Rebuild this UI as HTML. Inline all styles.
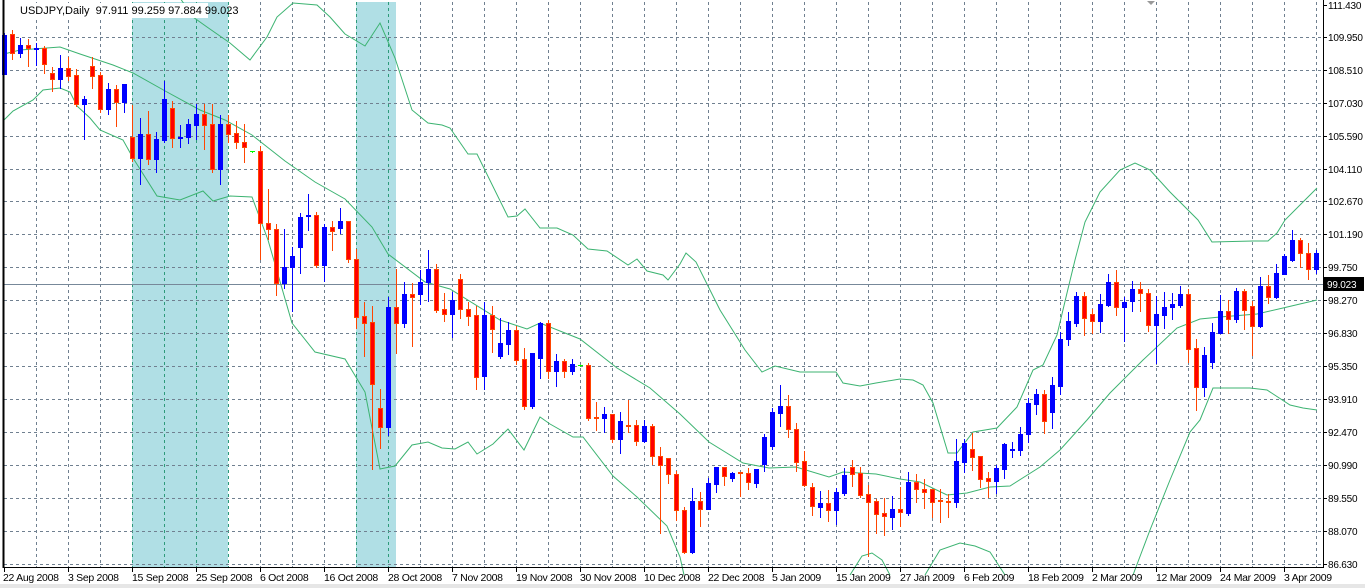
<!DOCTYPE html>
<html><head><meta charset="utf-8"><style>
html,body{margin:0;padding:0;background:#fff;width:1365px;height:588px;overflow:hidden}
svg{display:block;font-family:"Liberation Sans",sans-serif}
</style></head><body>
<svg id="c" width="1365" height="588" xmlns="http://www.w3.org/2000/svg">
<rect x="0" y="0" width="1365" height="588" fill="#fff"/>
<rect x="0" y="584" width="1365" height="4" fill="#e6e6e6"/>
<rect x="132" y="2" width="96" height="565" fill="#b0dfe5"/>
<rect x="356" y="2" width="40" height="565" fill="#b0dfe5"/>
<g id="grid"></g>
<g id="bands" fill="none" stroke="#3cb371" stroke-width="1"></g>
<line x1="3" y1="284.5" x2="1323" y2="284.5" stroke="#778899" stroke-width="1"/>
<g id="candles"></g>
<rect x="16" y="3" width="192" height="15" fill="#fff"/>
<text x="20" y="14" font-size="11" fill="#000" style="white-space:pre">USDJPY,Daily  97.911 99.259 97.884 99.023</text>
<line x1="3.5" y1="0" x2="3.5" y2="568" stroke="#000" stroke-width="2"/>
<line x1="3" y1="567.5" x2="1323" y2="567.5" stroke="#000"/>
<line x1="1323.5" y1="0" x2="1323.5" y2="568" stroke="#000"/>
<g id="axis" fill="#000"></g>
<rect x="1324" y="277" width="40" height="14" fill="#000"/>
<text x="1327" y="288" font-size="10" fill="#fff" letter-spacing="-0.2">99.023</text>
<path d="M1147 1 L1155 1 L1151 5 Z" fill="#999"/>
</svg>
<script>
var NS="http://www.w3.org/2000/svg";
function el(p,t,a){var e=document.createElementNS(NS,t);for(var k in a)e.setAttribute(k,a[k]);p.appendChild(e);return e;}
var grid=document.getElementById('grid');
var hy=[5,37,70,103,136,169,201,234,267,300,333,366,399,432,465,498,531,564];
for(var x=36;x<1323;x+=32){var sh=(x>=132&&x<=228)||(x>=356&&x<=396);
el(grid,'line',{x1:x+.5,y1:2,x2:x+.5,y2:567,stroke:sh?'#2e9a7a':'#708090','stroke-dasharray':'3,3'});}
hy.forEach(function(y){if(y>5&&y<567)el(grid,'line',{x1:4,y1:y+.5,x2:1323,y2:y+.5,stroke:'#708090','stroke-dasharray':'3,3'});});
var ax=document.getElementById('axis');
var pl=["111.430","109.950","108.510","107.030","105.590","104.110","102.670","101.190","99.750","98.270","96.830","95.350","93.910","92.470","90.990","89.550","88.070","86.630"];
pl.forEach(function(t,i){var y=hy[i];el(ax,'line',{x1:1323,y1:y+.5,x2:1327,y2:y+.5,stroke:'#000'});
var tx=el(ax,'text',{x:1328,y:y+4,'font-size':10,'letter-spacing':'-0.2'});tx.textContent=t;});
var dl=[["22 Aug 2008",4],["3 Sep 2008",68],["15 Sep 2008",132],["25 Sep 2008",196],["6 Oct 2008",260],["16 Oct 2008",324],["28 Oct 2008",388],["7 Nov 2008",452],["19 Nov 2008",516],["30 Nov 2008",580],["10 Dec 2008",644],["22 Dec 2008",708],["5 Jan 2009",772],["15 Jan 2009",836],["27 Jan 2009",900],["6 Feb 2009",964],["18 Feb 2009",1028],["2 Mar 2009",1092],["12 Mar 2009",1156],["24 Mar 2009",1220],["3 Apr 2009",1284]];
dl.forEach(function(d){el(ax,'line',{x1:d[1]+.5,y1:568,x2:d[1]+.5,y2:572,stroke:'#000'});var t=el(ax,'text',{x:d[1]+(d[1]==4?-1:0),y:581,'font-size':10.5,'letter-spacing':'-0.3'});t.textContent=d[0];});
var A=function(v){return 20+v*0.3444;};
var Z7=function(v){return 370+v/3;},Z8=function(v){return 260+v/3;},Z9=function(v){return 220+v/3;};
var d1=[["b",45,158,38,158],["r",42,95,30,112],["b",73,95,52,107],["r",73,82,55,135],["b",80,83,67,130],["r",82,127,75,153],["r",155,170,137,205],["b",138,170,102,198],["r",140,162,107,175],["r",160,245,142,250],["b",229,243,220,345],["r",134,162,107,197],["r",160,258,150,268],["b",200,258,183,272],["r",200,237,188,307],["b",186,237,186,267],["r",340,400,247,408],["b",331,400,285,475],["r",331,403,263,417],["b",346,403,325,442],["b",229,347,177,354],["r",256,344,236,368],["b",339,345,305,368],["b",302,341,287,356],["b",273,304,243,345],["r",273,304,245,376],["r",302,432,245,442],["b",302,432,276,475],["r",302,330,276,355],
["r",328,355,292,372],["r",354,368,302,413],["g",381,383,381,383],["r",380,588,367,693],["r",588,608,491,635],["r",607,763,592,798],["b",717,763,607,777],["b",685,718,658,845],["b",572,658,560,735],["b",566,573,505,610],["r",566,711,558,717],["b",601,711,592,758],["r",601,612,584,668],["b",584,603,546,618],["r",584,695,584,703],["r",694,861,666,893],["r",859,880,818,976],["r",877,1058,830,1305],["r",1128,1181,1070,1243],["b",833,1182,805,1205],["r",833,880,722,967],["b",796,880,761,890],["r",796,803,765,947],["b",760,796,725,826],["b",722,762,668,815],["r",722,841,708,848],["r",840,853,793,875],
["b",813,853,790,920],["r",752,838,738,865],["r",838,860,818,886],["r",858,1036,830,1070],["b",857,1033,820,1070],["r",856,896,830,963],["b",938,976,866,980],["b",900,940,876,970],["r",900,986,888,1000],["r",984,1120,952,1130],["b",967,1120,967,1126],["b",880,980,876,1040],["r",880,1018,872,1040],["b",990,1018,970,1062],["r",990,1020,985,1036],["b",1000,1020,985,1027],["g",1002,1004,1002,1004],["r",1002,1155,996,1162],["r",1153,1156,1108,1190],["b",1144,1155,1124,1197],["r",1144,1216,1144,1226],["b",1164,1216,1138,1258],["r",1176,1179,1103,1195],["r",1177,1223,1160,1235],["b",1180,1223,1160,1226],["r",1180,1266,1172,1288],["r",1266,1293,1240,1490],["r",1273,1318,1273,1345],["r",1318,1422,1310,1452]];
var d2=[["r",420,547,410,550],["b",393,547,353,550],["r",393,418,366,467],["b",339,418,323,418],["b",291,341,291,365],["r",291,317,291,345],["b",309,323,305,332],["r",307,311,307,377],["r",310,337,293,358],["b",296,338,296,350],["b",201,281,192,304],["b",126,227,115,236],["b",107,128,45,167],["r",107,178,75,200],["r",177,277,160,302],["r",273,344,243,348],["r",351,409,340,434],["b",399,410,363,440],["r",399,421,360,452],["b",366,421,354,462],["b",315,368,295,376],["r",292,313,270,347],["r",310,374,292,380],["r",373,395,345,557],["r",393,431,387,490],["r",430,437,385,494],["b",418,442,379,478],["r",418,427,352,467]];
var d3=[["b",665,760,636,765],["r",665,688,642,725],["r",688,697,658,745],["r",688,725,688,770],["r",720,723,688,785],["r",722,727,703,770],["b",603,727,536,742],["b",549,605,536,637],["r",568,590,520,630],["r",588,656,588,680],["r",655,662,636,710],["b",624,662,614,700],["b",551,626,549,653],["b",567,571,545,592],["b",521,569,500,585],["b",428,523,415,547],["b",402,431,387,463],["r",402,482,390,518],["b",375,455,351,503],["b",237,377,216,402],["b",183,238,156,256],["b",108,188,97,197],["r",108,173,95,225],["r",162,182,148,220],["b",131,183,101,215],["b",66,134,42,138]];
var d4=[["r",186,260,150,285],["b",245,260,230,362],["b",207,243,183,273],["r",207,220,186,273],["r",219,314,207,332],["b",282,314,228,428],["b",261,285,216,324],["b",253,261,218,298],["b",222,255,198,262],["r",222,386,207,425],["r",384,500,357,570],["b",405,500,381,527],["b",336,426,309,443],["b",272,339,225,339],["r",272,296,240,339],["b",213,297,204,306],["r",213,269,207,327],["r",258,318,243,405],["b",198,318,171,321],["r",198,230,165,250],["b",159,231,132,233],["b",108,161,102,162],["b",60,120,30,123],["r",60,100,55,141],["r",100,146,70,177],["b",99,146,90,159]];
var bars=[];
d1.forEach(function(b){bars.push([b[0],A(b[1]),A(b[2]),A(b[3]),A(b[4])]);});
d2.forEach(function(b){bars.push([b[0],Z7(b[1]),Z7(b[2]),Z7(b[3]),Z7(b[4])]);});
d3.forEach(function(b){bars.push([b[0],Z8(b[1]),Z8(b[2]),Z8(b[3]),Z8(b[4])]);});
d4.forEach(function(b){bars.push([b[0],Z9(b[1]),Z9(b[2]),Z9(b[3]),Z9(b[4])]);});
var cg=document.getElementById('candles');
bars.forEach(function(b,i){var x=4+8*i;var col=b[0]=='b'?'#0000ff':(b[0]=='g'?'#00ff00':'#ff4500');
el(cg,'line',{x1:x+.5,y1:Math.round(b[3]),x2:x+.5,y2:Math.round(b[4])+1,stroke:col});
var t=Math.round(b[1]),h=Math.max(1,Math.round(b[2])-t);
if(b[0]=='g'){el(cg,'line',{x1:x-2,y1:t+.5,x2:x+3,y2:t+.5,stroke:col});return;}
if(h<=2){el(cg,'rect',{x:x-2,y:t,width:5,height:2,fill:col});return;}
if(b[0]=='b')el(cg,'rect',{x:x-2,y:t,width:5,height:h+1,fill:'#0000ff'});
else el(cg,'rect',{x:x-1.5,y:t+.5,width:4,height:h,fill:'#ff0000',stroke:'#ff4500'});});
var bg=document.getElementById('bands');
function pl_(pts){el(bg,'polyline',{points:pts.map(function(p){return p.join(',');}).join(' ')});}
pl_([[4,54],[20,50],[60,47],[80,54],[113,65],[133,73],[167,92],[200,110],[225,120],[252,135],[285,161],[315,182],[345,199],[372,227],[388,254],[425,282],[450,289],[500,320],[527,329],[540,323],[580,339],[617,368],[650,388],[680,414],[709,442],[743,463],[769,468],[796,467],[829,477],[843,472],[876,474],[900,479],[920,482],[947,495],[967,493],[990,487],[1010,486],[1040,467],[1060,450],[1087,420],[1110,393],[1143,360],[1177,328],[1200,319],[1220,317],[1257,314],[1283,308],[1317,300]]);
pl_([[4,120],[13,111],[33,100],[43,90],[60,88],[70,92],[77,106],[90,118],[100,130],[123,140],[133,158],[157,196],[180,200],[203,191],[213,201],[230,196],[252,197],[268,240],[292,323],[315,352],[345,359],[365,392],[380,469],[395,466],[412,445],[428,442],[442,448],[455,449],[468,442],[477,454],[493,444],[508,429],[524,450],[540,417],[550,424],[573,437],[583,437],[613,476],[637,497],[667,526],[680,557],[684,575]]);
pl_([[850,575],[862,556],[872,553],[882,560],[890,575]]);
pl_([[925,575],[940,550],[960,543],[975,546],[990,552],[1005,575]]);
pl_([[1133,575],[1150,530],[1170,480],[1190,432],[1200,420],[1213,388],[1250,388],[1267,390],[1290,405],[1303,408],[1317,410]]);
pl_([[180,-2],[193,17],[207,27],[230,43],[250,60],[267,37],[277,17],[293,3],[317,5],[330,17],[345,34],[365,46],[380,23],[395,58],[412,110],[428,123],[442,125],[450,128],[468,154],[477,154],[508,217],[517,216],[525,209],[540,228],[557,228],[573,235],[588,249],[607,251],[628,265],[637,259],[647,271],[663,275],[668,280],[680,264],[686,253],[696,262],[720,310],[745,350],[762,372],[775,366],[800,372],[836,372],[843,383],[860,386],[876,383],[900,379],[913,380],[923,385],[933,403],[948,453],[957,453],[973,432],[997,428],[1017,407],[1033,370],[1043,365],[1057,335],[1067,293],[1075,260],[1085,222],[1100,192],[1120,170],[1135,163],[1150,170],[1170,192],[1198,220],[1212,242],[1253,241],[1268,241],[1277,233],[1285,220],[1300,205],[1317,188]]);
</script>
</body></html>
